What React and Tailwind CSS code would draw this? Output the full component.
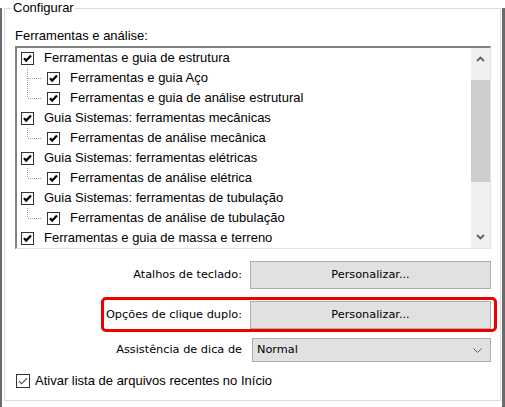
import React from "react";

const rows = [
  { level: 0, text: "Ferramentas e guia de estrutura" },
  { level: 1, text: "Ferramentas e guia Aço", more: true },
  { level: 1, text: "Ferramentas e guia de análise estrutural" },
  { level: 0, text: "Guia Sistemas: ferramentas mecânicas" },
  { level: 1, text: "Ferramentas de análise mecânica" },
  { level: 0, text: "Guia Sistemas: ferramentas elétricas" },
  { level: 1, text: "Ferramentas de análise elétrica" },
  { level: 0, text: "Guia Sistemas: ferramentas de tubulação" },
  { level: 1, text: "Ferramentas de análise de tubulação" },
  { level: 0, text: "Ferramentas e guia de massa e terreno" },
];

const TreeCheck = () => (
  <svg width="13" height="13" viewBox="0 0 13 13" className="shrink-0">
    <rect x="0.5" y="0.5" width="12" height="12" fill="#fff" stroke="#333" />
    <path d="M3 6.2 L5.2 8.6 L10 3.6" fill="none" stroke="#000" strokeWidth="2.2" />
  </svg>
);

const Connector = ({ more }) => (
  <svg width="15" height="20" viewBox="0 0 15 20" className="shrink-0">
    <line x1="0.5" y1="0" x2="0.5" y2={more ? 20 : 10} stroke="#a0a0a0" strokeDasharray="1 1" />
    <line x1="1" y1="10.5" x2="15" y2="10.5" stroke="#a0a0a0" strokeDasharray="1 1" />
  </svg>
);

const Chevron = ({ up }) => (
  <svg width="9" height="6" viewBox="0 0 9 6">
    <polyline
      points={up ? "1,5 4.5,1.5 8,5" : "1,1 4.5,4.5 8,1"}
      fill="none"
      stroke="#606060"
      strokeWidth="1.8"
    />
  </svg>
);

const WinButton = ({ children }) => (
  <button
    type="button"
    className="h-[28px] w-full bg-[#e1e1e1] border border-[#adadad] text-black"
  >
    {children}
  </button>
);

export default function App() {
  return (
    <div className="w-[505px] h-[407px] bg-white border-l-2 border-r-[3px] border-b-[5px] border-[#6b6b6b] font-['Liberation_Sans',Arial,sans-serif] text-[13px] text-black">
      <div className="relative mt-[8px] ml-[2px] mr-[1px] h-[393px] border border-[#dcdcdc]">
        <span className="absolute left-[7px] top-[-9px] bg-white px-[1px] leading-[15px]">
          Configurar
        </span>

        <div className="pt-[19px] pl-[10px] pr-[9px]">
          <div className="leading-[15px] mb-[3px]">Ferramentas e análise:</div>

          <div className="flex h-[203px] border-t-2 border-l-2 border-r border-b border-t-[#828282] border-l-[#828282] border-r-[#e3e3e3] border-b-[#e3e3e3]">
            <div className="flex-1 overflow-hidden">
              {rows.map((r, i) => (
                <div key={i} className="flex items-center h-[20px] whitespace-nowrap">
                  {r.level === 0 ? (
                    <div className="ml-[4px] flex items-center">
                      <TreeCheck />
                    </div>
                  ) : (
                    <div className="ml-[10px] flex items-center">
                      <Connector more={r.more} />
                      <div className="ml-[5px] flex items-center">
                        <TreeCheck />
                      </div>
                    </div>
                  )}
                  <span className="ml-[10px] leading-[20px]">{r.text}</span>
                </div>
              ))}
            </div>
            <div className="w-[19px] bg-[#f0f0f0] flex flex-col">
              <div className="h-[22px] flex items-center justify-center">
                <Chevron up />
              </div>
              <div className="h-[10px]" />
              <div className="h-[102px] bg-[#cdcdcd]" />
              <div className="flex-1" />
              <div className="h-[22px] flex items-center justify-center">
                <Chevron />
              </div>
            </div>
          </div>

          <div className="font-['DejaVu_Sans',Verdana,sans-serif] text-[11.3px]">
            <div className="mt-[12px] grid grid-cols-[1fr_241px] gap-x-[8px] items-center">
              <div className="text-right">Atalhos de teclado:</div>
              <WinButton>Personalizar...</WinButton>
            </div>

            <div className="relative mt-[12px] grid grid-cols-[1fr_241px] gap-x-[8px] items-center">
              <div className="text-right">Opções de clique duplo:</div>
              <WinButton>Personalizar...</WinButton>
              <div className="absolute left-[86px] right-[-6px] top-[-4px] bottom-[-3px] border-[3px] border-[#ee0000] rounded-[5px] pointer-events-none" />
            </div>

            <div className="mt-[9px] grid grid-cols-[1fr_239px] gap-x-[10px] items-center">
              <div className="text-right">Assistência de dica de</div>
              <div className="h-[24px] bg-[#e1e1e1] border border-[#adadad] flex items-center justify-between pl-[4px] pr-[8px]">
                <span>Normal</span>
                <svg width="9" height="5" viewBox="0 0 9 5">
                  <polyline points="0.5,0.5 4.5,4.5 8.5,0.5" fill="none" stroke="#5f5f5f" strokeWidth="1" />
                </svg>
              </div>
            </div>
          </div>

          <div className="mt-[9px] flex items-center h-[20px] ml-[1px]">
            <svg width="14" height="14" viewBox="0 0 14 14" className="shrink-0">
              <rect x="0.5" y="0.5" width="13" height="13" fill="#fff" stroke="#333" />
              <polyline points="3,7.2 5.6,9.8 11,4.2" fill="none" stroke="#444" strokeWidth="1.1" />
            </svg>
            <span className="ml-[5px] leading-[20px]">Ativar lista de arquivos recentes no Início</span>
          </div>
        </div>
      </div>
    </div>
  );
}
